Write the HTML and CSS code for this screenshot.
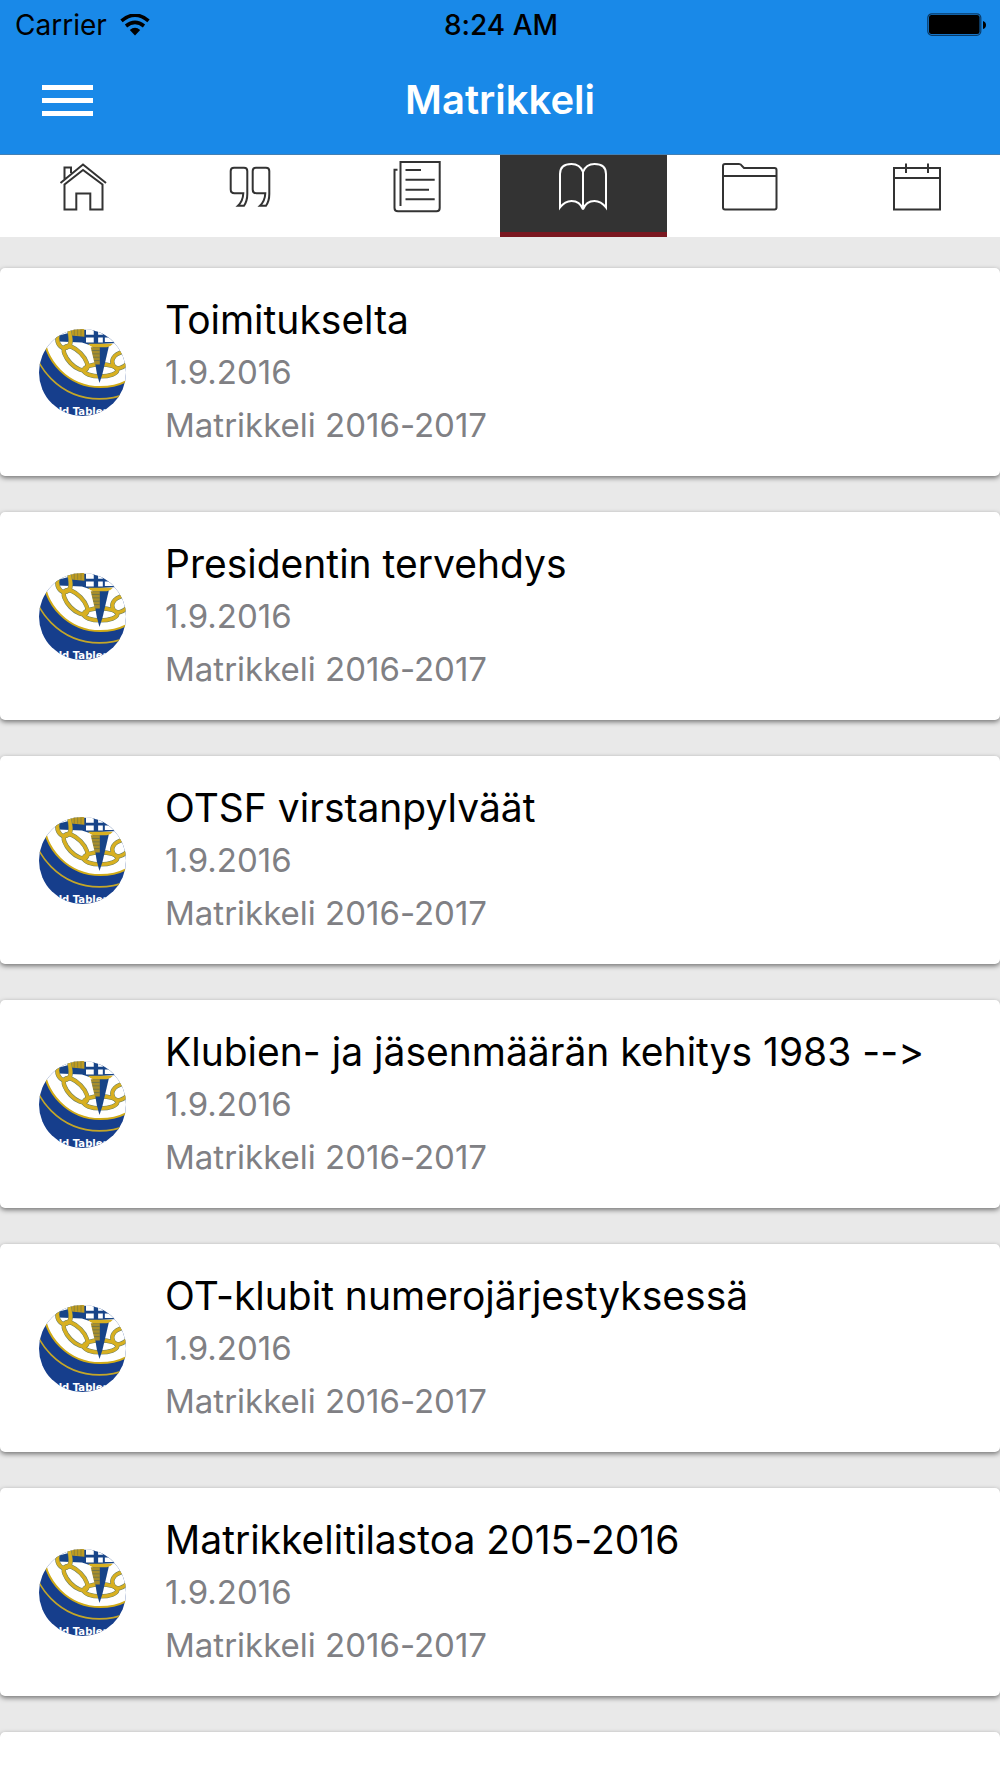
FILE: index.html
```html
<!DOCTYPE html>
<html lang="fi">
<head>
<meta charset="utf-8">
<meta name="viewport" content="width=device-width, initial-scale=1">
<title>Matrikkeli</title>
<link rel="stylesheet" href="styles.css">
</head>
<body>
<svg width="0" height="0" class="defs" aria-hidden="true">
  <defs>
    <clipPath id="round"><circle cx="186.500" cy="186.500" r="129.500"/></clipPath>
    <symbol id="logo" viewBox="57 57 259 259">
      <g clip-path="url(#round)">
        <rect x="50" y="50" width="275" height="275" fill="#163e8c"/>
        <circle cx="240" cy="60" r="170" fill="#fff" stroke="#d0ab18" stroke-width="6"/>
        <circle cx="237" cy="62" r="203" fill="none" stroke="#c4a628" stroke-width="5"/>
        <path d="M105 79L180 60H252L300 98L205 104L185 97L116 94Z" fill="#174488"/>
        <path d="M197 50h23v24h-23zM233 50h14v24h-14zM197 82h23v15h-23zM233 82h14v15h-14zM253 82h40v14h-40z" fill="#fff"/>
        <path d="M152 50h40v30l-40-4z" fill="#bd9b22"/>
        <path d="M162 54v23M172 54v23M182 54v23" stroke="#7b7a3c" stroke-width="2"/>
        <g fill="none" stroke="#6a7e62" stroke-width="13">
          <path d="M113 75C106 105 130 123 145 109C157 98 149 75 145 50"/>
          <ellipse cx="166" cy="144" rx="21" ry="46" transform="rotate(-44 166 144)"/>
          <ellipse cx="240" cy="180" rx="50" ry="18"/>
          <path d="M306 125C279 132 268 151 280 168C289 180 310 172 320 158"/>
        </g>
        <g fill="none" stroke="#d8b021" stroke-width="10">
          <path d="M113 75C106 105 130 123 145 109C157 98 149 75 145 50"/>
          <ellipse cx="166" cy="144" rx="21" ry="46" transform="rotate(-44 166 144)"/>
          <ellipse cx="240" cy="180" rx="50" ry="18"/>
          <path d="M306 125C279 132 268 151 280 168C289 180 310 172 320 158"/>
        </g>
        <path d="M216 108L265 108L246 190L237 218L229 188Z" fill="#174488"/>
        <path d="M211 111H238V163H223Z" fill="#a88e2c"/>
        <path d="M214 121H238M216 131H238M218 141H238M221 151H238" stroke="#5c6c52" stroke-width="2"/>
        <path d="M203 101H277Q269 111 259 111H219Q210 111 203 101Z" fill="#d8b021"/>
        <text x="90" y="312" class="logo-text">Old Tables</text>
      </g>
    </symbol>
  </defs>
</svg>

<header class="header">
  <div class="status">
    <div class="carrier">
      <span>Carrier</span>
      <svg width="30" height="22" viewBox="0 0 30 22" aria-hidden="true">
        <path d="M1.500 6.800Q15-4.400 28.500 6.800M6 12Q15 4.800 24 12" fill="none" stroke="#000" stroke-width="3.600"/>
        <path d="M9.800 16Q15 11.600 20.200 16L15 21.500Z"/>
      </svg>
    </div>
    <time class="clock">8:24 AM</time>
    <svg class="battery" width="60" height="24" viewBox="0 0 60 24" aria-hidden="true">
      <rect x=".8" y=".8" width="53" height="21.500" rx="4" fill="none" stroke="#0a3a66" stroke-width="1.200"/>
      <rect x="2" y="2" width="50.600" height="19" rx="2.500"/>
      <path d="M56 8Q59 9 59 12T56 16Z"/>
    </svg>
  </div>
  <div class="bar">
    <button class="menu" type="button" aria-label="Valikko"><i></i><i></i><i></i></button>
    <h1>Matrikkeli</h1>
  </div>
</header>

<nav class="tabs">
  <a href="#" aria-label="Etusivu"><svg viewBox="0 0 60 60"><path d="M7.500 27L30 8.500L53 27M11.500 23V11.500H18V17M30 14L11.500 28.500V53.500H23.300V37.500H37.300V53.500H49.500V28.500Z"/></svg></a>
  <a href="#" aria-label="Palstat"><svg viewBox="0 0 60 60"><path id="q" d="M14 11.700H24Q27.300 11.700 27.300 15V38Q27.300 45 24 49.700H18Q23 45 23.300 37.300H14.500Q10.700 37.300 10.700 33.500V15Q10.700 11.700 14 11.700Z"/><use href="#q" x="22"/></svg></a>
  <a href="#" aria-label="Uutiset"><svg viewBox="0 0 60 60"><path d="M10.500 13.700H7.500V52Q7.500 55.300 11 55.300H49.500Q52.700 55.300 52.700 52V6H13.500V50M18.500 14H34M18.500 23.700H47.700M18.500 33.700H42M18.500 43.300H47.700"/></svg></a>
  <a href="#" class="active" aria-label="Matrikkeli" aria-current="page"><svg viewBox="0 0 60 60"><path d="M30 16V53.500Q27 45 18.500 45Q12 45 7 51.500V18Q7 8 18.500 8Q27 8 30 16Q33 8 41.500 8Q53 8 53 18V51.500Q48 45 41.500 45Q33 45 30 53.500"/></svg></a>
  <a href="#" aria-label="Tiedostot"><svg viewBox="0 0 60 60"><path d="M5 8H19Q21 8 22 10L24 12H54.500Q56.500 12 56.500 14V51.500Q56.500 53.500 54.500 53.500H5Q3 53.500 3 51.500V10Q3 8 5 8ZM3 20H56.500"/></svg></a>
  <a href="#" aria-label="Kalenteri"><svg viewBox="0 0 60 60"><path d="M7 12H53V53.500H7ZM7 22H53M19 7.500V17M41 7.500V17"/></svg></a>
</nav>

<main class="list">
  <article class="card"><svg class="avatar" aria-hidden="true"><use href="#logo"/></svg><div class="text"><h2>Toimitukselta</h2><p>1.9.2016</p><p>Matrikkeli 2016-2017</p></div></article>
  <article class="card"><svg class="avatar" aria-hidden="true"><use href="#logo"/></svg><div class="text"><h2>Presidentin tervehdys</h2><p>1.9.2016</p><p>Matrikkeli 2016-2017</p></div></article>
  <article class="card"><svg class="avatar" aria-hidden="true"><use href="#logo"/></svg><div class="text"><h2>OTSF virstanpylväät</h2><p>1.9.2016</p><p>Matrikkeli 2016-2017</p></div></article>
  <article class="card"><svg class="avatar" aria-hidden="true"><use href="#logo"/></svg><div class="text"><h2>Klubien- ja jäsenmäärän kehitys 1983 --&gt;</h2><p>1.9.2016</p><p>Matrikkeli 2016-2017</p></div></article>
  <article class="card"><svg class="avatar" aria-hidden="true"><use href="#logo"/></svg><div class="text"><h2>OT-klubit numerojärjestyksessä</h2><p>1.9.2016</p><p>Matrikkeli 2016-2017</p></div></article>
  <article class="card"><svg class="avatar" aria-hidden="true"><use href="#logo"/></svg><div class="text"><h2>Matrikkelitilastoa 2015-2016</h2><p>1.9.2016</p><p>Matrikkeli 2016-2017</p></div></article>
  <article class="card"></article>
</main>
</body>
</html>
```
FILE: styles.css
```css
* { box-sizing: border-box; }

body {
  margin: 0;
  height: 100vh;
  display: flex;
  flex-direction: column;
  background: #e9e9e9;
  color: #000;
  font-family: Inter, "Liberation Sans", sans-serif;
  font-feature-settings: "calt" 0;
}

h1, h2, p { margin: 0; font-weight: 400; }

.defs { position: absolute; }

.header {
  flex: none;
  background: #1989e8;
  border-bottom: 1px solid #4480b4;
}

.status {
  display: grid;
  grid-template-columns: 1fr auto 1fr;
  align-items: center;
  height: 50px;
  padding: 0 13px 0 15px;
  font-size: 28px;
  line-height: 50px;
}

.carrier { display: flex; align-items: center; gap: 13px; }
.clock { font-weight: 500; }
.battery { justify-self: end; }

.bar {
  display: grid;
  grid-template-columns: 1fr auto 1fr;
  align-items: center;
  height: 104px;
  padding: 0 42px 4px;
}

.bar h1 { color: #fff; font-size: 40px; font-weight: 600; line-height: 100px; }

.menu {
  display: flex;
  flex-direction: column;
  gap: 8px;
  width: 51px;
  padding: 0;
  border: 0;
  background: none;
}

.menu i { height: 5px; background: #fff; }

.tabs {
  flex: none;
  display: grid;
  grid-template-columns: repeat(6, 1fr);
  height: 82px;
  background: #fff;
}

.tabs a {
  display: flex;
  justify-content: center;
  align-items: flex-start;
  padding-top: 1px;
}

.tabs svg {
  width: 60px;
  height: 60px;
  fill: none;
  stroke: #333;
  stroke-width: 2;
}

.tabs .active { background: #333; border-bottom: 5px solid #7a1820; }
.tabs .active svg { stroke: #fff; }

.list {
  flex: 1;
  min-height: 0;
  display: flex;
  flex-direction: column;
  gap: 36px;
  padding-top: 31px;
  overflow-y: auto;
  scrollbar-width: none;
}

.card {
  flex: none;
  display: flex;
  align-items: center;
  gap: 39px;
  min-height: 208px;
  padding: 24px 39px;
  background: #fff;
  border-radius: 5px;
  box-shadow: 0 2px 5px rgba(0, 0, 0, .5);
}

.avatar { flex: none; width: 87px; height: 87px; }
.card h2 { font-size: 39px; line-height: 53px; }
.card p { color: #808084; font-size: 33px; line-height: 53px; }

.logo-text {
  fill: #fff;
  font: 700 30px "DejaVu Sans", sans-serif;
}
```
